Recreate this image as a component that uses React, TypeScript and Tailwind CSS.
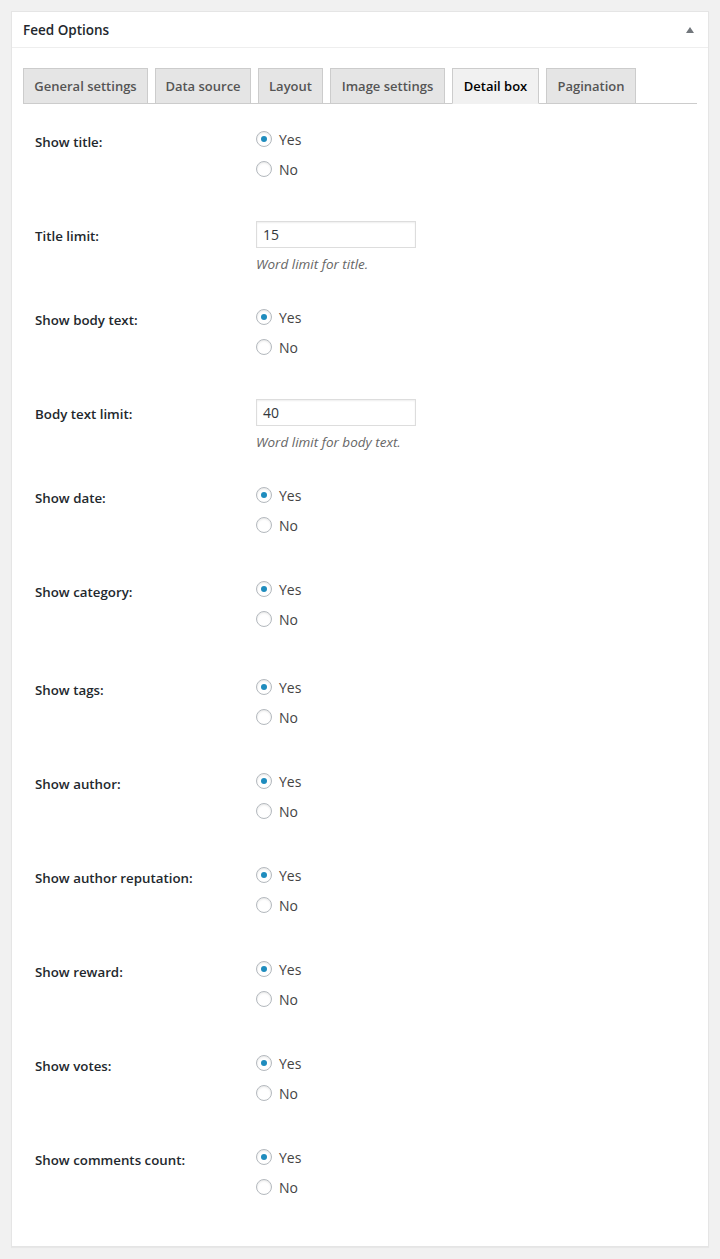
import React from "react";

const tabs = [
  { name: "General settings", w: "w-[125px]", active: false },
  { name: "Data source", w: "w-[96px]", active: false },
  { name: "Layout", w: "w-[65px]", active: false },
  { name: "Image settings", w: "w-[115px]", active: false },
  { name: "Detail box", w: "w-[87px]", active: true },
  { name: "Pagination", w: "w-[90px]", active: false },
];

type Row =
  | { kind: "radio"; label: string; h: string }
  | { kind: "input"; label: string; value: string; help: string; h: string };

const rows: Row[] = [
  { kind: "radio", label: "Show title:", h: "h-[94px]" },
  { kind: "input", label: "Title limit:", value: "15", help: "Word limit for title.", h: "h-[84px]" },
  { kind: "radio", label: "Show body text:", h: "h-[94px]" },
  { kind: "input", label: "Body text limit:", value: "40", help: "Word limit for body text.", h: "h-[84px]" },
  { kind: "radio", label: "Show date:", h: "h-[94px]" },
  { kind: "radio", label: "Show category:", h: "h-[98px]" },
  { kind: "radio", label: "Show tags:", h: "h-[94px]" },
  { kind: "radio", label: "Show author:", h: "h-[94px]" },
  { kind: "radio", label: "Show author reputation:", h: "h-[94px]" },
  { kind: "radio", label: "Show reward:", h: "h-[94px]" },
  { kind: "radio", label: "Show votes:", h: "h-[94px]" },
  { kind: "radio", label: "Show comments count:", h: "h-[94px]" },
];

function Radio({ checked, text }: { checked: boolean; text: string }) {
  return (
    <label className="flex items-center h-[26px] gap-[7px]">
      <span className="w-4 h-4 rounded-full border border-[#b4b9be] bg-white shadow-[inset_0_1px_2px_rgba(0,0,0,0.1)] flex items-center justify-center">
        {checked && <span className="w-[6px] h-[6px] rounded-full bg-[#1e8cbe]" />}
      </span>
      <span className="text-[14px] text-[#444]">{text}</span>
    </label>
  );
}

export default function App() {
  return (
    <div className="min-h-screen bg-[#f1f1f1] p-[11px] font-['Open_Sans',sans-serif]">
      <div className="bg-white border border-[#e5e5e5] shadow-[0_1px_1px_rgba(0,0,0,0.04)]">
        {/* header */}
        <div className="h-[36px] border-b border-[#eee] pl-[11px] pr-[14px] pt-px flex items-center justify-between">
          <h2 className="text-[13.5px] font-semibold text-[#23282d]">Feed Options</h2>
          <span className="w-0 h-0 border-l-[4px] border-r-[4px] border-b-[6px] border-l-transparent border-r-transparent border-b-[#72777c]" />
        </div>

        <div className="px-[11px] pt-[20px] pb-[22px]">
          {/* tabs */}
          <div className="flex gap-[7px] border-b border-[#ccc]">
            {tabs.map((t) => (
              <div
                key={t.name}
                className={
                  t.active
                    ? `${t.w} -mb-px py-[5px] text-center leading-[24px] text-[13px] font-semibold border border-[#ccc] border-b-[#f1f1f1] bg-[#f1f1f1] text-black`
                    : `${t.w} -mb-px py-[5px] text-center leading-[24px] text-[13px] font-semibold border border-[#ccc] bg-[#e5e5e5] text-[#555]`
                }
              >
                {t.name}
              </div>
            ))}
          </div>

          {/* form */}
          <div className="mt-[8px]">
            {rows.map((r) => (
              <div key={r.label} className={`flex ${r.h}`}>
                <div className="w-[233px] pl-[12px] pt-[20px] leading-[20px] text-[13.3px] font-semibold text-[#23282d]">
                  {r.label}
                </div>
                {r.kind === "radio" ? (
                  <div className="pt-[14px] flex flex-col gap-[4px]">
                    <Radio checked text="Yes" />
                    <Radio checked={false} text="No" />
                  </div>
                ) : (
                  <div className="pt-[15px]">
                    <div className="w-[160px] h-[27px] border border-[#ddd] bg-white shadow-[inset_0_1px_2px_rgba(0,0,0,0.07)] px-[6px] flex items-center text-[14px] text-[#32373c]">
                      {r.value}
                    </div>
                    <p className="mt-[7px] leading-[18px] text-[13.5px] italic text-[#666]">{r.help}</p>
                  </div>
                )}
              </div>
            ))}
          </div>
        </div>
      </div>
    </div>
  );
}
